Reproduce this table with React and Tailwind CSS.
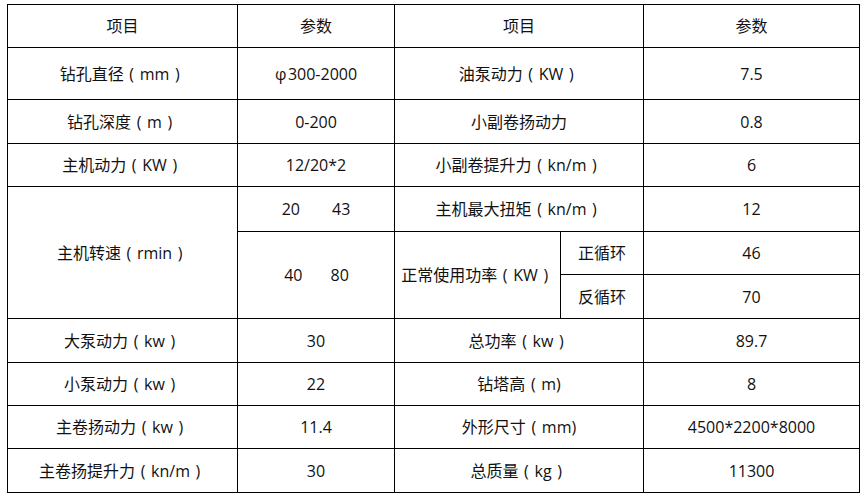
const font = { fontFamily: '"Open Sans", "Noto Sans CJK SC", sans-serif' };

const top = [
  ['钻孔直径（mm）', 'φ300-2000', '油泵动力（KW）', '7.5', 52],
  ['钻孔深度（m）', '0-200', '小副卷扬动力', '0.8', 44],
  ['主机动力（KW）', '12/20*2', '小副卷提升力（kn/m）', '6', 43],
];

const bottom = [
  ['大泵动力（kw）', '30', '总功率（kw）', '89.7', 44],
  ['小泵动力（kw）', '22', '钻塔高（m)', '8', 43],
  ['主卷扬动力（kw）', '11.4', '外形尺寸（mm)', '4500*2200*8000', 43],
  ['主卷扬提升力（kn/m）', '30', '总质量（kg）', '11300', 44],
];

// full-width parens in the shot sit centred in their box, so draw them that way
function Txt({ s }) {
  return s.split(/([（）φ])/).map((p, i) => {
    if (p === '（') return <span key={i} className="inline-block w-[16px] text-center">(</span>;
    if (p === '）') return <span key={i} className="inline-block w-[16px] text-center">)</span>;
    if (p === 'φ') return <span key={i} className="inline-block w-[13px] text-left">φ</span>;
    return p;
  });
}

const cell = 'border border-black text-center align-middle p-0 font-normal whitespace-nowrap';

export default function App() {
  return (
    <div className="w-[862px] h-[495px] bg-white pt-[4px] pl-[7px]" style={font}>
      <table className="table-fixed border-collapse border border-black text-[16px] text-[#111] w-[852px]">
        <colgroup>
          <col className="w-[230px]" />
          <col className="w-[157px]" />
          <col className="w-[166px]" />
          <col className="w-[83px]" />
          <col className="w-[216px]" />
        </colgroup>
        <tbody>
          <tr className="h-[43px]">
            <td className={cell}>项目</td>
            <td className={cell}>参数</td>
            <td className={cell} colSpan={2}>项目</td>
            <td className={cell}>参数</td>
          </tr>
          {top.map(r => (
            <tr key={r[0]} style={{ height: r[4] }}>
              <td className={cell}><Txt s={r[0]} /></td>
              <td className={cell}><Txt s={r[1]} /></td>
              <td className={cell} colSpan={2}><Txt s={r[2]} /></td>
              <td className={cell}>{r[3]}</td>
            </tr>
          ))}
          <tr className="h-[45px]">
            <td className={cell} rowSpan={3}><Txt s="主机转速（rmin）" /></td>
            <td className={cell}>
              <span>20</span>
              <span className="ml-[32px]">43</span>
            </td>
            <td className={cell} colSpan={2}><Txt s="主机最大扭矩（kn/m）" /></td>
            <td className={cell}>12</td>
          </tr>
          <tr className="h-[43px]">
            <td className={cell} rowSpan={2}>
              <span className="pl-[1px]">40</span>
              <span className="ml-[28px]">80</span>
            </td>
            <td className={cell} rowSpan={2}><Txt s="正常使用功率（KW）" /></td>
            <td className={cell}>正循环</td>
            <td className={cell}>46</td>
          </tr>
          <tr className="h-[44px]">
            <td className={cell}>反循环</td>
            <td className={cell}>70</td>
          </tr>
          {bottom.map(r => (
            <tr key={r[0]} style={{ height: r[4] }}>
              <td className={cell}><Txt s={r[0]} /></td>
              <td className={cell}>{r[1]}</td>
              <td className={cell} colSpan={2}><Txt s={r[2]} /></td>
              <td className={cell}>{r[3]}</td>
            </tr>
          ))}
        </tbody>
      </table>
    </div>
  );
}
